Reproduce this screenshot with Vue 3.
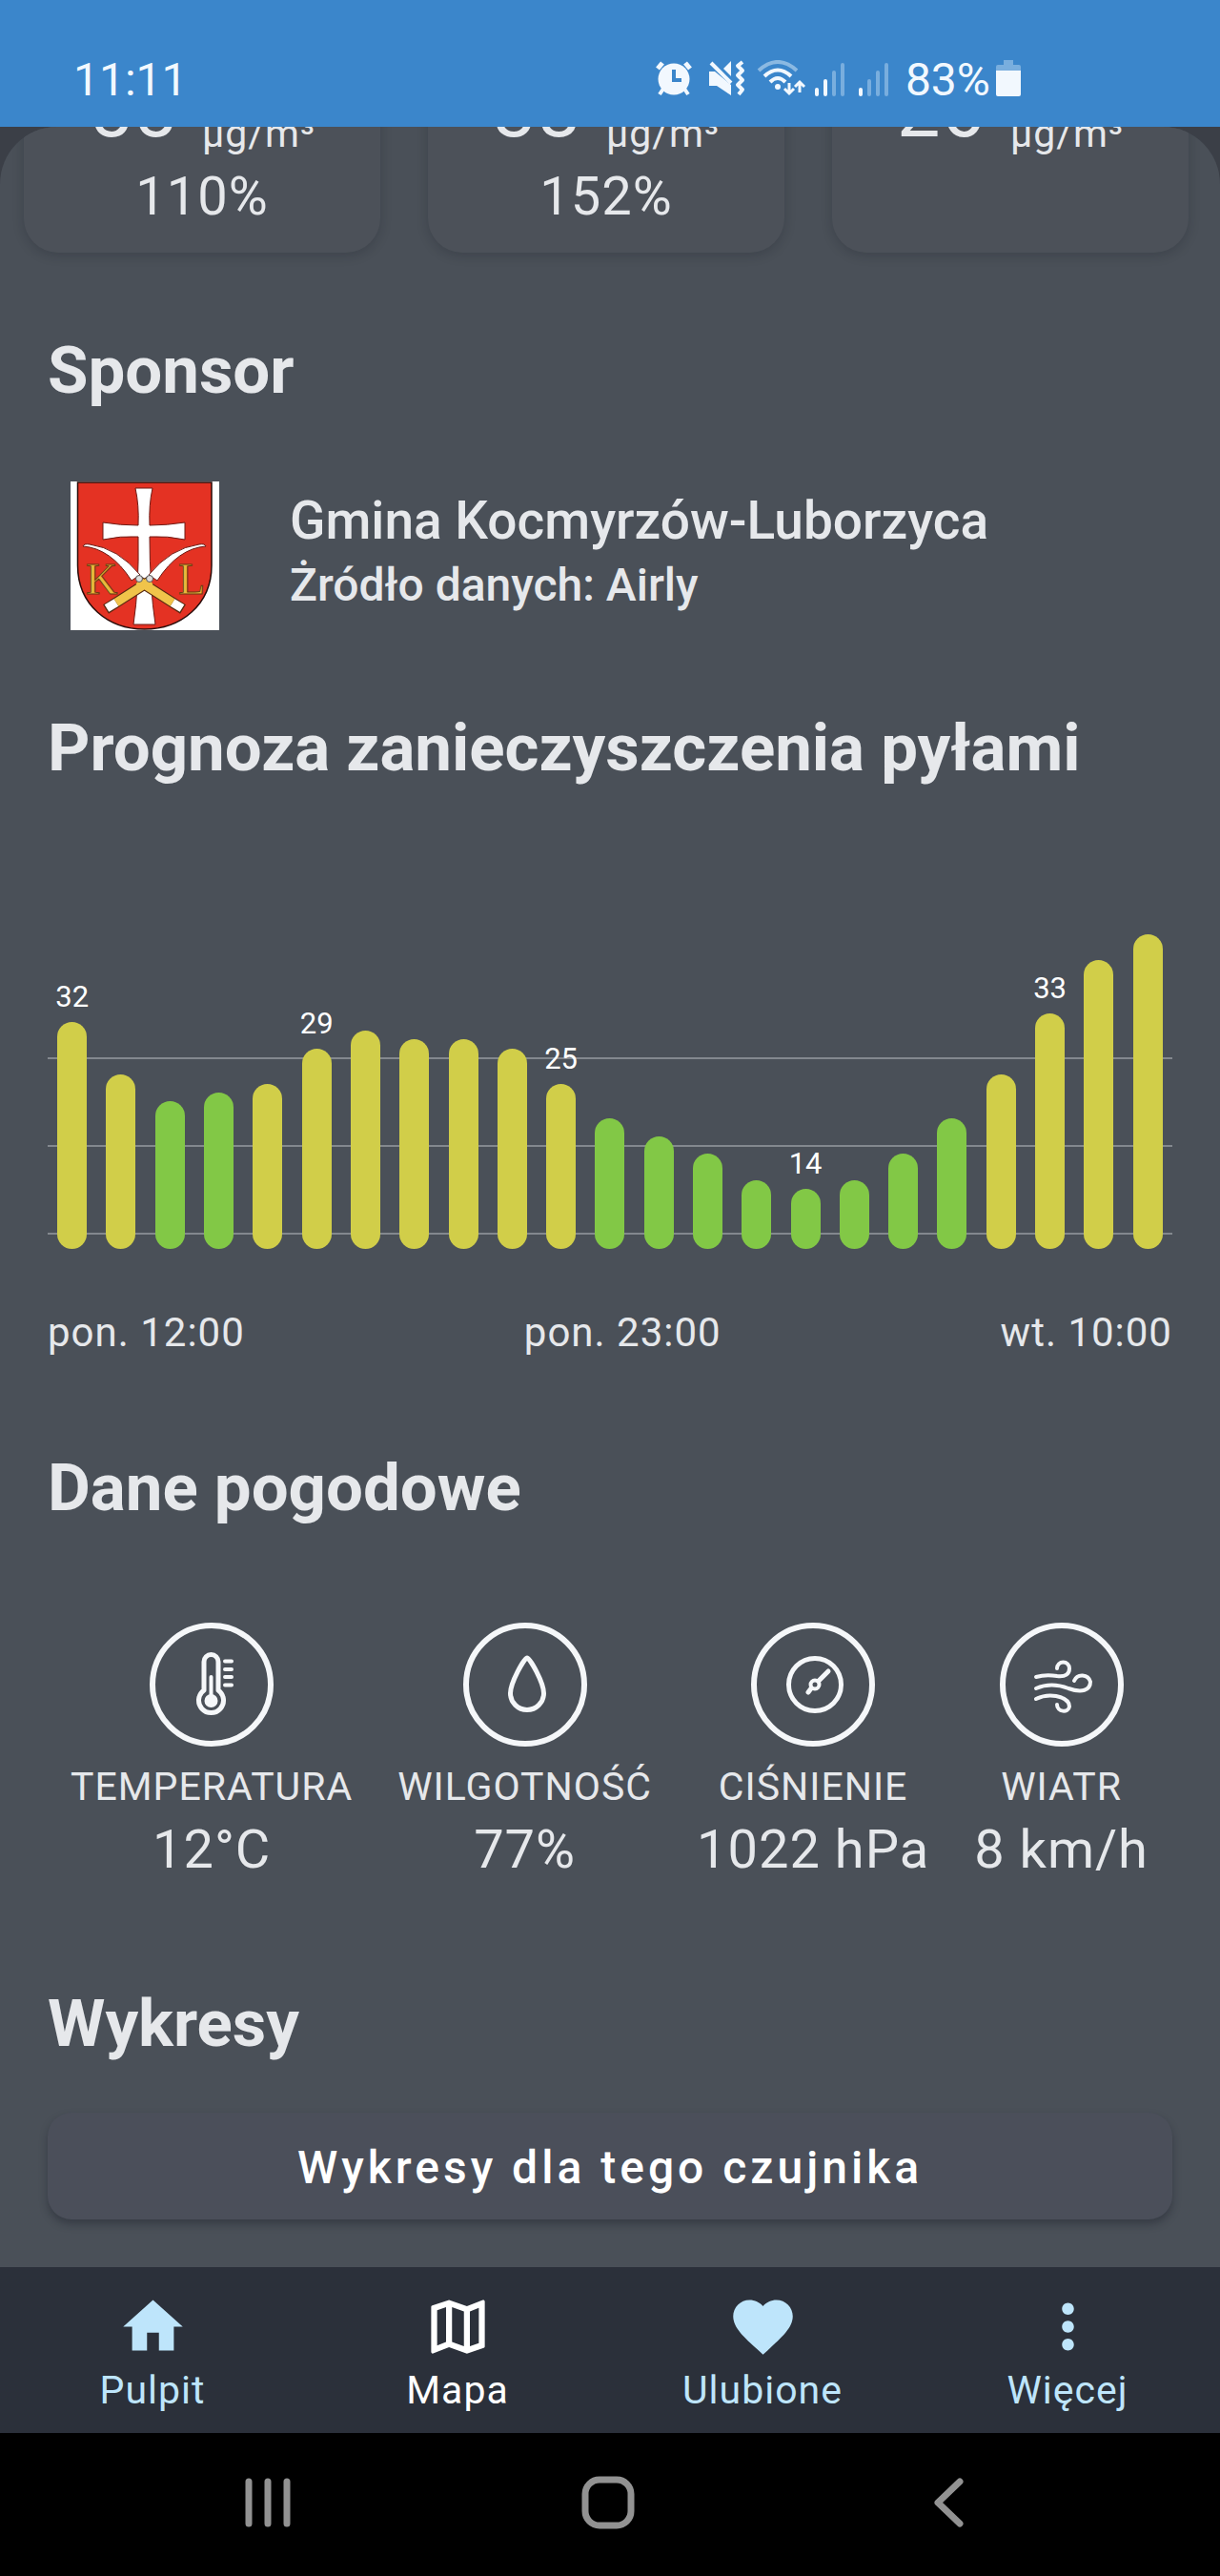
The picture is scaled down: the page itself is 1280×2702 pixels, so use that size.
<script setup>
const pollutants = [
  { value: '55', percent: '110%' },
  { value: '38', percent: '152%' },
  { value: '26', percent: '' },
]

const forecast = [32, 26, 23, 24, 25, 29, 31, 30, 30, 29, 25, 21, 19, 17, 14, 13, 14, 17, 21, 26, 33, 39, 42]
const captions = { 0: '32', 5: '29', 10: '25', 15: '14', 20: '33' }

const bars = forecast.map((level, i) => ({
  height: Math.round(238 - (32 - level) * 9.22),
  good: level < 25,
  caption: captions[i] || '',
}))

const weather = [
  { id: 'temperature', label: 'TEMPERATURA', value: '12°C' },
  { id: 'humidity', label: 'WILGOTNOŚĆ', value: '77%' },
  { id: 'pressure', label: 'CIŚNIENIE', value: '1022 hPa' },
  { id: 'wind', label: 'WIATR', value: '8 km/h' },
]

const tabs = [
  { label: 'Pulpit', path: 'M10 20v-6h4v6h5v-8h3L12 3 2 12h3v8z' },
  {
    label: 'Mapa',
    active: true,
    path: 'M20.5 3l-.16.03L15 5.1 9 3 3.36 4.9c-.21.07-.36.25-.36.48V20.5c0 .28.22.5.5.5l.16-.03L9 18.9l6 2.1 5.64-1.9c.21-.07.36-.25.36-.48V3.5c0-.28-.22-.5-.5-.5zM10 5.47l4 1.4v11.66l-4-1.4V5.47zm-5 .99l3-1.01v11.7l-3 1.16V6.46zm14 11.08l-3 1.01V6.86l3-1.16v11.84z',
  },
  {
    label: 'Ulubione',
    path: 'M12 21.35l-1.45-1.32C5.4 15.36 2 12.28 2 8.5 2 5.42 4.42 3 7.5 3c1.74 0 3.41.81 4.5 2.09C13.09 3.81 14.76 3 16.5 3 19.58 3 22 5.42 22 8.5c0 3.78-3.4 6.86-8.55 11.54L12 21.35z',
  },
  {
    label: 'Więcej',
    path: 'M12 8c1.1 0 2-.9 2-2s-.9-2-2-2-2 .9-2 2 .9 2 2 2zm0 2c-1.1 0-2 .9-2 2s.9 2 2 2 2-.9 2-2-.9-2-2-2zm0 6c-1.1 0-2 .9-2 2s.9 2 2 2 2-.9 2-2-.9-2-2-2z',
  },
]
</script>

<template>
  <div class="screen">
    <header class="status">
      <span class="clock">11:11</span>
      <div class="indicators">
        <svg class="alarm" width="40" height="38" viewBox="0 0 40 38">
          <path d="M3 9 8 3M37 9 32 3" stroke="#f2f8fe" stroke-width="5" />
          <path d="M9 30 5 36M31 30 35 36" stroke="#f2f8fe" stroke-width="4" />
          <circle cx="20" cy="20" r="16.500" fill="#f2f8fe" />
          <path d="M20 10V21H28" fill="none" stroke="#3b86cb" stroke-width="4" />
        </svg>
        <svg class="mute" width="40" height="38" viewBox="0 0 40 38">
          <path d="M2 12H8L25 26V37L10 27H2Z" fill="#f2f8fe" />
          <path d="M4 3 25 24" stroke="#f2f8fe" stroke-width="4" />
          <path d="M25 1V17L17 9Z" fill="#f2f8fe" />
          <path d="M37 2 32 6 37 11 32 16 37 21 32 26 37 31 33 36" fill="none" stroke="#f2f8fe" stroke-width="4" stroke-linejoin="round" />
        </svg>
        <svg class="wifi" width="52" height="38" viewBox="0 0 52 38">
          <g fill="none" stroke-width="4">
            <path d="M2 11Q22 -7 42 11" stroke="#8bb9e2" />
            <path d="M8 17Q22 4 36 17M14 23Q22 15 30 23" stroke="#f2f8fe" />
            <path d="M34 24V35M29 30 34 35 39 30M45 34V23M40 28 45 23 50 28" stroke="#f2f8fe" stroke-width="3" />
          </g>
          <circle cx="22" cy="28" r="3" fill="#f2f8fe" />
        </svg>
        <svg class="signal" width="34" height="38" viewBox="0 0 34 38">
          <g stroke-width="4" stroke-linecap="round">
            <path d="M3 31V36M12 22V36" stroke="#f2f8fe" />
            <path d="M21 13V36M30 5V36" stroke="#79aede" />
          </g>
        </svg>
        <svg class="signal" width="34" height="38" viewBox="0 0 34 38">
          <g stroke-width="4" stroke-linecap="round">
            <path d="M3 31V36" stroke="#f2f8fe" />
            <path d="M12 22V36M21 13V36M30 5V36" stroke="#79aede" />
          </g>
        </svg>
        <span class="charge">83%</span>
        <svg class="battery" width="26" height="38" viewBox="0 0 26 38">
          <path d="M8 0H18V5H24Q26 5 26 7V11H0V7Q0 5 2 5H8Z" fill="#79aede" />
          <path d="M0 11H26V36Q26 38 24 38H2Q0 38 0 36Z" fill="#f2f8fe" />
        </svg>
      </div>
    </header>

    <div class="backdrop">
      <main class="sheet">
        <section class="cards">
          <article v-for="item in pollutants" :key="item.value" class="card">
            <p class="reading">
              <span class="amount">{{ item.value }}</span>
              <span class="unit">µg/m³</span>
            </p>
            <p v-if="item.percent" class="percent">{{ item.percent }}</p>
          </article>
        </section>

        <section class="block sponsor">
          <h2>Sponsor</h2>
          <div class="sponsor-row">
            <svg class="crest" width="156" height="156" viewBox="0 0 156 156" role="img" aria-label="Herb gminy">
              <rect width="156" height="156" fill="#fff" />
              <path d="M7.500 1H148V88C148 130 115 155 77.500 155S7.500 130 7.500 88Z" fill="#e43223" stroke="#2a0c0a" stroke-width="1.500" />
              <path d="M68 7H86Q82 25 83 46Q101 46 120 43V61Q102 57 83 58Q83 110 89 150H66Q72 110 71 58Q52 57 34 61V43Q52 46 71 46Q72 25 68 7Z" fill="#fff" stroke="#6d1a14" />
              <g fill="#fff" stroke="#6d1a14">
                <path d="M13 68Q14 65 20 66Q50 70 73 98L64 104Q42 70 13 68Z" />
                <path d="M142 68Q141 65 135 66Q105 70 82 98L91 104Q113 70 142 68Z" />
              </g>
              <g stroke-width="11" stroke="#5a2a12">
                <path d="M84 104 37 134M71 104 118 134" />
              </g>
              <g stroke-width="9" stroke="#fff">
                <path d="M48 127 38 133M107 127 117 133" />
              </g>
              <g stroke-width="9" stroke="#f0c44a">
                <path d="M84 104 48 127M71 104 107 127" />
              </g>
              <circle cx="72" cy="102" r="3.500" fill="#ddd" stroke="#555" />
              <circle cx="83" cy="102" r="3.500" fill="#ddd" stroke="#555" />
              <g class="crest-letters" fill="#e8b93c" stroke="#6d3a12" stroke-width="1" font-size="46">
                <text x="16" y="118">K</text>
                <text x="113" y="118">L</text>
              </g>
            </svg>
            <div class="sponsor-text">
              <p class="sponsor-name">Gmina Kocmyrzów-Luborzyca</p>
              <p class="sponsor-source">Żródło danych: Airly</p>
            </div>
          </div>
        </section>

        <section class="block forecast">
          <h2>Prognoza zanieczyszczenia pyłami</h2>
          <div class="chart">
            <div class="gridlines">
              <i></i>
              <i></i>
              <i></i>
            </div>
            <div v-for="(bar, i) in bars" :key="i" class="slot">
              <span v-if="bar.caption" class="caption">{{ bar.caption }}</span>
              <div class="bar" :class="{ good: bar.good }" :style="{ height: bar.height + 'px' }"></div>
            </div>
          </div>
          <div class="axis">
            <span>pon. 12:00</span>
            <span>pon. 23:00</span>
            <span>wt. 10:00</span>
          </div>
        </section>

        <section class="block conditions">
          <h2>Dane pogodowe</h2>
          <div class="weather">
            <div v-for="item in weather" :key="item.id" class="metric">
              <svg width="130" height="130" viewBox="0 0 130 130" fill="none" stroke="#f5f7f9" stroke-linecap="round" stroke-linejoin="round">
                <circle cx="65" cy="65" r="62" stroke-width="6" />
                <g v-if="item.id === 'temperature'">
                  <path d="M57 71V41a7.500 7.500 0 0 1 15 0V71a13 13 0 1 1-15 0Z" stroke-width="5" />
                  <path d="M64.500 57V80" stroke-width="4" />
                  <circle cx="64.500" cy="82" r="7" fill="#f5f7f9" stroke="none" />
                  <path d="M79 40.500H86M79 49H86M79 57H86M79 65.500H86" stroke-width="4" />
                </g>
                <path v-else-if="item.id === 'humidity'" d="M67 37C64 37 49.500 63 49.500 74a17.500 17.500 0 0 0 35 0C84.500 63 70 37 67 37Z" stroke-width="5" />
                <g v-else-if="item.id === 'pressure'">
                  <circle cx="67" cy="65" r="27.500" stroke-width="5" />
                  <circle cx="67" cy="65" r="4.500" stroke-width="4" />
                  <path d="M71 61 81 51M63 69 60 73" stroke-width="5" />
                </g>
                <g v-else stroke-width="4">
                  <path d="M38 57Q48 54 60 56C69 57 73 54 73 48A6.500 6.500 0 0 0 60 48" />
                  <path d="M38 69Q54 62 72 69C86 74 95 71 95 62A9 9 0 0 0 78 61" />
                  <path d="M38 80Q48 75 59 77C69 79 73 83 73 88C72 95 60 94 60 86" />
                </g>
              </svg>
              <span class="metric-label">{{ item.label }}</span>
              <span class="metric-value">{{ item.value }}</span>
            </div>
          </div>
        </section>

        <section class="block charts">
          <h2>Wykresy</h2>
          <button class="charts-button" type="button">Wykresy dla tego czujnika</button>
        </section>
      </main>
    </div>

    <nav class="tabs">
      <a v-for="tab in tabs" :key="tab.label" href="#" class="tab" :class="{ active: tab.active }">
        <svg width="75" height="75" viewBox="0 0 24 24" fill="currentColor"><path :d="tab.path" /></svg>
        <span>{{ tab.label }}</span>
      </a>
    </nav>

    <footer class="system">
      <button type="button" aria-label="Ostatnie">
        <svg width="56" height="56" viewBox="0 0 56 56"><path d="M8 6V50M28 6V50M48 6V50" /></svg>
      </button>
      <button type="button" aria-label="Ekran główny">
        <svg width="56" height="56" viewBox="0 0 56 56"><rect x="4" y="4" width="48" height="48" rx="15" /></svg>
      </button>
      <button type="button" aria-label="Wstecz">
        <svg width="56" height="56" viewBox="0 0 56 56"><path d="M40 6 17 28 40 50" /></svg>
      </button>
    </footer>
  </div>
</template>

<style>
body {
  background: #000;
}
</style>

<style scoped>
.screen {
  font-family: Roboto, sans-serif;
  color: #e6e8eb;
  background: #4a5058;
}

p,
h2 {
  margin: 0;
}

button {
  font: inherit;
  border: 0;
  padding: 0;
}

svg {
  display: block;
  flex: none;
}

.status {
  display: flex;
  justify-content: space-between;
  padding: 56px 209px 21px 77px;
  background: #3b86cb;
  color: #f2f8fe;
  font-size: 48px;
  line-height: 56px;
}

.indicators {
  display: flex;
  align-items: center;
}

.indicators svg {
  margin-bottom: 4px;
}

.alarm {
  margin-right: 15px;
}

.mute {
  margin-right: 12px;
}

.wifi {
  margin-right: 8px;
}

.signal {
  margin-right: 12px;
}

.charge {
  margin: 0 6px 0 4px;
}

.backdrop {
  background: #3b3f47;
}

.sheet {
  overflow: hidden;
  border-radius: 60px 60px 0 0;
  background: #4a5058;
}

.cards {
  display: grid;
  grid-template-columns: repeat(3, 1fr);
  gap: 50px;
  margin-top: -120px;
  padding: 0 33px 0 25px;
}

.card {
  padding: 55px 0 27px;
  border-radius: 36px;
  background: #4c5159;
  box-shadow: 0 3px 12px rgba(20, 24, 32, 0.22);
  text-align: center;
}

.reading {
  display: flex;
  align-items: flex-end;
  justify-content: center;
  gap: 26px;
}

.amount {
  font-size: 81px;
  line-height: 96px;
  letter-spacing: 1px;
}

.unit {
  font-size: 41px;
  line-height: 48px;
  letter-spacing: 1px;
}

.percent {
  margin-top: 10px;
  font-size: 56px;
  line-height: 64px;
  letter-spacing: 1px;
}

.block {
  padding: 0 50px;
}

h2 {
  font-size: 69px;
  line-height: 80px;
  font-weight: 700;
}

.sponsor {
  margin-top: 84px;
}

.sponsor-row {
  display: flex;
  align-items: center;
  gap: 74px;
  margin-top: 76px;
  padding: 0 24px;
}

.crest-letters {
  font-family: "Liberation Serif", serif;
}

.sponsor-text {
  padding-bottom: 10px;
  font-weight: 500;
}

.sponsor-name {
  font-size: 55px;
  line-height: 72px;
}

.sponsor-source {
  font-size: 48px;
  line-height: 64px;
}

.forecast {
  margin-top: 84px;
}

.chart {
  position: relative;
  display: flex;
  align-items: flex-end;
  height: 405px;
  margin-top: 80px;
}

.gridlines {
  position: absolute;
  inset: 0 0 15px;
  display: flex;
  flex-direction: column;
  justify-content: flex-end;
  gap: 90px;
}

.gridlines i {
  height: 2px;
  background: #83888e;
}

.slot {
  position: relative;
  flex: 1;
  display: flex;
  flex-direction: column;
  align-items: center;
}

.caption {
  margin-bottom: 10px;
  color: #fff;
  font-size: 31px;
  line-height: 32px;
}

.bar {
  width: 31px;
  border-radius: 16px;
  background: #d1ce49;
}

.bar.good {
  background: #82c846;
}

.axis {
  display: flex;
  justify-content: space-between;
  margin-top: 64px;
  font-size: 42px;
  line-height: 48px;
  letter-spacing: 1px;
}

.conditions {
  margin-top: 99px;
}

.weather {
  display: flex;
  justify-content: space-between;
  margin-top: 101px;
  padding: 0 25px 0 24px;
}

.metric {
  display: flex;
  flex-direction: column;
  align-items: center;
}

.metric-label {
  margin-top: 14px;
  font-size: 41px;
  line-height: 56px;
  letter-spacing: 1px;
}

.metric-value {
  margin-top: 2px;
  font-size: 56px;
  line-height: 72px;
  letter-spacing: 1px;
}

.charts {
  margin-top: 107px;
  padding-bottom: 50px;
}

.charts-button {
  display: block;
  width: 100%;
  height: 112px;
  margin-top: 53px;
  padding-top: 2px;
  border-radius: 25px;
  background: #4b4f5a;
  box-shadow: 0 5px 8px rgba(20, 22, 34, 0.35);
  color: #fff;
  font-size: 48px;
  font-weight: 500;
  letter-spacing: 4px;
}

.tabs {
  display: flex;
  padding: 25px 0 21px;
  background: #2b303a;
}

.tab {
  flex: 1;
  display: flex;
  flex-direction: column;
  align-items: center;
  gap: 5px;
  color: #bee5fb;
  font-size: 41px;
  line-height: 48px;
  letter-spacing: 1px;
  text-decoration: none;
}

.tab.active {
  color: #fff;
}

.system {
  display: flex;
  justify-content: center;
  padding: 45px 5px 48px 0;
  background: #000;
}

.system button {
  display: flex;
  justify-content: center;
  flex: 0 0 28%;
  background: none;
}

.system svg {
  fill: none;
  stroke: #929292;
  stroke-width: 7;
  stroke-linecap: round;
  stroke-linejoin: round;
}
</style>
